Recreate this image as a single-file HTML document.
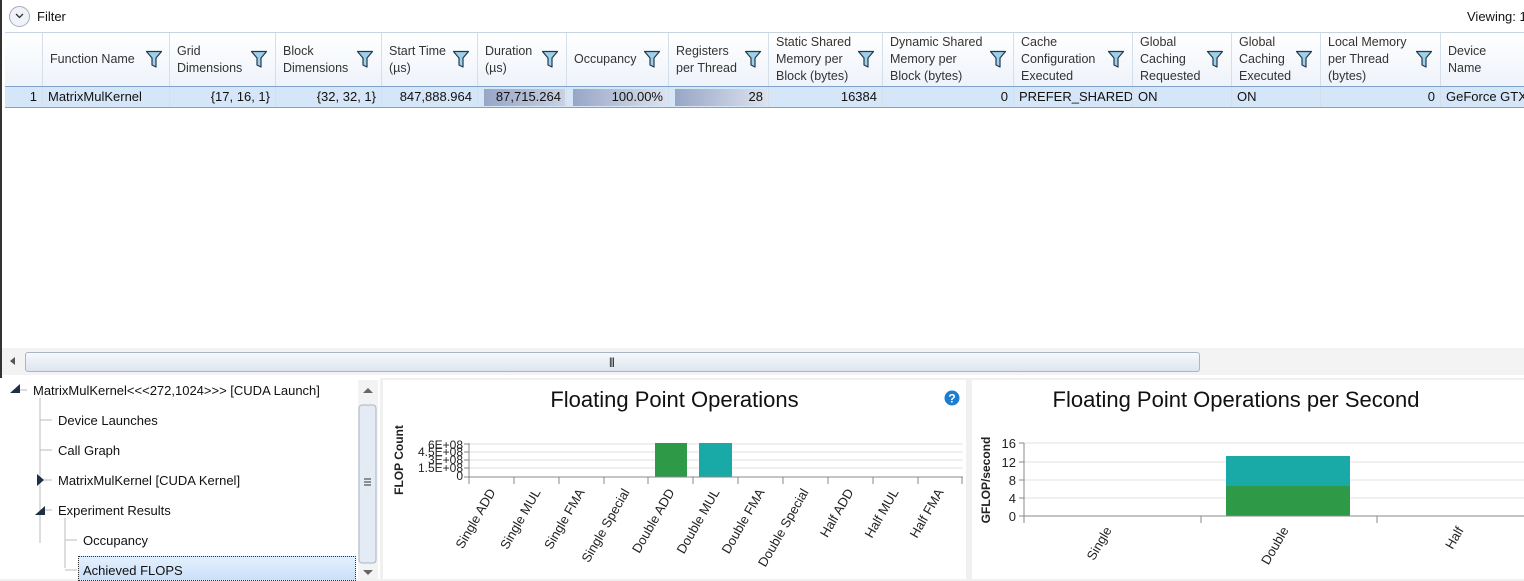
<!DOCTYPE html>
<html><head><meta charset="utf-8"><style>
*{margin:0;padding:0;box-sizing:border-box}
body{width:1524px;height:579px;overflow:hidden;background:#f0f0f0;font-family:"Liberation Sans",sans-serif;font-size:12.5px;color:#111;position:relative}
.a{position:absolute}
.top{left:0;top:0;width:1524px;height:378px;background:#fff}
.hd{top:33px;height:53px;background:linear-gradient(#fff,#eef3fa);border-right:1px solid #d5dfe9;display:flex;align-items:center;padding-left:7px;line-height:17px;color:#333}
.cell{top:87px;height:20px;line-height:20px;border-right:1px solid #d5dfe9;padding:0 5px;white-space:nowrap;overflow:hidden;font-size:13px}
.tl{position:absolute;font-size:13px;white-space:nowrap}
</style></head><body>
<div class="a top"></div>
<div class="a" style="left:0;top:0;width:5px;height:378px;background:#fff;border-left:2px solid #333"></div>
<div class="a" style="left:9px;top:6px;width:21px;height:21px;border:1px solid #aab;border-radius:50%;background:#eef3fa"></div>
<svg class="a" style="left:13px;top:12px" width="13" height="8"><path d="M3 2 L6.5 5.5 L10 2" stroke="#333" stroke-width="1.3" fill="none"/></svg>
<div class="a" style="left:37px;top:9px;font-size:13px">Filter</div>
<div class="a" style="left:1467px;top:9px;font-size:13px;white-space:nowrap">Viewing: 1</div>
<div class="a" style="left:5px;top:32px;width:1519px;height:1px;background:#c8d3df"></div>

<div class="a hd" style="left:5px;width:38px"></div>
<div class="a hd" style="left:43px;width:127px">Function Name</div>
<div class="a hd" style="left:170px;width:106px">Grid<br>Dimensions</div>
<div class="a hd" style="left:276px;width:106px">Block<br>Dimensions</div>
<div class="a hd" style="left:382px;width:96px">Start Time<br>(µs)</div>
<div class="a hd" style="left:478px;width:89px">Duration<br>(µs)</div>
<div class="a hd" style="left:567px;width:102px">Occupancy</div>
<div class="a hd" style="left:669px;width:100px">Registers<br>per Thread</div>
<div class="a hd" style="left:769px;width:114px">Static Shared<br>Memory per<br>Block (bytes)</div>
<div class="a hd" style="left:883px;width:131px">Dynamic Shared<br>Memory per<br>Block (bytes)</div>
<div class="a hd" style="left:1014px;width:119px">Cache<br>Configuration<br>Executed</div>
<div class="a hd" style="left:1133px;width:99px">Global<br>Caching<br>Requested</div>
<div class="a hd" style="left:1232px;width:89px">Global<br>Caching<br>Executed</div>
<div class="a hd" style="left:1321px;width:120px">Local Memory<br>per Thread<br>(bytes)</div>
<div class="a hd" style="left:1441px;width:90px">Device<br>Name</div>

<svg class="a" style="left:0;top:0" width="1524" height="90">
<defs><g id="fn"><path d="M0.5 0.5 H15.5 L10 7 V16 L6 14 V7 Z" fill="#9fd0ea" stroke="#24394e" stroke-width="1.2" stroke-linejoin="round"/></g></defs>
<use href="#fn" x="146" y="51"/><use href="#fn" x="251" y="51"/><use href="#fn" x="357" y="51"/>
<use href="#fn" x="453" y="51"/><use href="#fn" x="542" y="51"/><use href="#fn" x="644" y="51"/>
<use href="#fn" x="745" y="51"/><use href="#fn" x="858" y="51"/><use href="#fn" x="990" y="51"/>
<use href="#fn" x="1108" y="51"/><use href="#fn" x="1207" y="51"/><use href="#fn" x="1296" y="51"/>
<use href="#fn" x="1416" y="51"/>
</svg>

<div class="a" style="left:5px;top:86px;width:1519px;height:22px;background:#d5e6f8;border-top:1px solid #7fa3cf;border-bottom:1px solid #7fa3cf"></div>
<div class="a cell" style="left:5px;width:38px;text-align:right">1</div>
<div class="a cell" style="left:43px;width:127px">MatrixMulKernel</div>
<div class="a cell" style="left:170px;width:106px;text-align:right">{17, 16, 1}</div>
<div class="a cell" style="left:276px;width:106px;text-align:right">{32, 32, 1}</div>
<div class="a cell" style="left:382px;width:96px;text-align:right">847,888.964</div>
<div class="a" style="left:484px;top:89px;width:81px;height:17px;background:linear-gradient(90deg,#98a6c6,#c9d1e2)"></div>
<div class="a cell" style="left:478px;width:89px;text-align:right">87,715.264</div>
<div class="a" style="left:573px;top:89px;width:94px;height:17px;background:linear-gradient(90deg,#98a6c6,#dce3ee)"></div>
<div class="a cell" style="left:567px;width:102px;text-align:right">100.00%</div>
<div class="a" style="left:675px;top:89px;width:92px;height:17px;background:linear-gradient(90deg,#98a6c6,#dce3ee)"></div>
<div class="a cell" style="left:669px;width:100px;text-align:right">28</div>
<div class="a cell" style="left:769px;width:114px;text-align:right">16384</div>
<div class="a cell" style="left:883px;width:131px;text-align:right">0</div>
<div class="a cell" style="left:1014px;width:119px">PREFER_SHARED</div>
<div class="a cell" style="left:1133px;width:99px">ON</div>
<div class="a cell" style="left:1232px;width:89px">ON</div>
<div class="a cell" style="left:1321px;width:120px;text-align:right">0</div>
<div class="a cell" style="left:1441px;width:90px">GeForce GTX</div>

<div class="a" style="left:2px;top:348px;width:1522px;height:27px;background:#f3f3f3"></div>
<svg class="a" style="left:9px;top:356px" width="8" height="10"><path d="M6 1 L1 5 L6 9Z" fill="#555"/></svg>
<div class="a" style="left:25px;top:352px;width:1175px;height:20px;border:1px solid #a9b6c6;border-radius:3px;background:linear-gradient(#f6f8fb,#dde5ef)"></div>
<div class="a" style="left:609px;top:357px;font-size:10px;letter-spacing:-1px">|||</div>

<div class="a" style="left:0;top:378px;width:380px;height:201px;background:#fff"></div>
<div class="a" style="left:358px;top:380px;width:20px;height:199px;background:#f3f3f3"></div>
<svg class="a" style="left:358px;top:380px" width="20" height="199"><path d="M5 13 L10 8 L15 13Z" fill="#666"/><path d="M5 190 L10 195 L15 190Z" fill="#666"/>
<rect x="1" y="25" width="17" height="158" rx="3" fill="#e4ebf4" stroke="#a9b6c6"/><path d="M6 99H13M6 102H13M6 105H13" stroke="#333"/></svg>
<svg class="a" style="left:0;top:378px" width="360" height="201">
<path d="M10 15 L20 15 L20 6Z" fill="#1f2f45"/><path d="M20 12H27" stroke="#bbb"/>
<path d="M40 20V165M40 42H52M40 72H52M40 102H52M40 132H52" stroke="#bbb"/>
<path d="M37 96 L44 102 L37 108Z" fill="#1f2f45"/>
<path d="M35 137 L45 137 L45 128Z" fill="#1f2f45"/>
<path d="M65 140V190M65 162H77M65 192H77" stroke="#bbb"/>
</svg>
<div class="tl" style="left:33px;top:383px">MatrixMulKernel&lt;&lt;&lt;272,1024&gt;&gt;&gt; [CUDA Launch]</div>
<div class="tl" style="left:58px;top:413px">Device Launches</div>
<div class="tl" style="left:58px;top:443px">Call Graph</div>
<div class="tl" style="left:58px;top:473px">MatrixMulKernel [CUDA Kernel]</div>
<div class="tl" style="left:58px;top:503px">Experiment Results</div>
<div class="tl" style="left:83px;top:533px">Occupancy</div>
<div class="a" style="left:78px;top:556px;width:278px;height:25px;background:linear-gradient(#e4f0fd,#c9e0f9);border:1px dotted #333"></div>
<div class="tl" style="left:83px;top:563px">Achieved FLOPS</div>

<div class="a" style="left:383px;top:380px;width:583px;height:199px;background:#fff"></div>
<div class="a" style="left:383px;top:387px;width:583px;text-align:center;font-size:22px">Floating Point Operations</div>
<svg class="a" style="left:944px;top:390px" width="16" height="16"><circle cx="8" cy="8" r="7.5" fill="#1a7dd0"/><text x="8" y="12.5" font-size="12" font-weight="bold" fill="#fff" text-anchor="middle" font-family="Liberation Sans">?</text></svg>
<svg class="a" style="left:383px;top:380px" width="583" height="199">
<g stroke="#e2e2e2"><path d="M86 64H580M86 72H580M86 80H580M86 88H580"/></g>
<rect x="272" y="63" width="32" height="34" fill="#2e9a48"/>
<rect x="316" y="63" width="33" height="34" fill="#19aaa8"/>
<path d="M86 97H580" stroke="#888"/>
<path d="M86 63V104" stroke="#888"/>
<g stroke="#888"><path d="M81 64H86M81 72H86M81 80H86M81 88H86M81 97H86"/>
<path d="M131 97V104M176 97V104M221 97V104M265 97V104M310 97V104M355 97V104M400 97V104M445 97V104M490 97V104M535 97V104M579 97V104"/></g>
<g font-size="12" text-anchor="end" fill="#222" font-family="Liberation Sans">
<text x="80" y="69">6E+08</text><text x="80" y="76">4.5E+08</text><text x="80" y="84">3E+08</text><text x="80" y="92">1.5E+08</text><text x="80" y="100">0</text>
<text transform="translate(20,80) rotate(-90)" text-anchor="middle" font-weight="bold">FLOP Count</text>
</g>
<g font-size="13" text-anchor="end" fill="#222" font-family="Liberation Sans">
<text transform="translate(113,112) rotate(-60)">Single ADD</text>
<text transform="translate(158,112) rotate(-60)">Single MUL</text>
<text transform="translate(202,112) rotate(-60)">Single FMA</text>
<text transform="translate(247,112) rotate(-60)">Single Special</text>
<text transform="translate(292,112) rotate(-60)">Double ADD</text>
<text transform="translate(337,112) rotate(-60)">Double MUL</text>
<text transform="translate(382,112) rotate(-60)">Double FMA</text>
<text transform="translate(426,112) rotate(-60)">Double Special</text>
<text transform="translate(471,112) rotate(-60)">Half ADD</text>
<text transform="translate(516,112) rotate(-60)">Half MUL</text>
<text transform="translate(561,112) rotate(-60)">Half FMA</text>
</g>
</svg>

<div class="a" style="left:972px;top:380px;width:552px;height:199px;background:#fff"></div>
<div class="a" style="left:972px;top:387px;width:528px;text-align:center;font-size:22px">Floating Point Operations per Second</div>
<svg class="a" style="left:972px;top:380px" width="552" height="199">
<g stroke="#e2e2e2"><path d="M52 63H552M52 82H552M52 100H552M52 118H552"/></g>
<rect x="254" y="76" width="124" height="30" fill="#19aaa8"/>
<rect x="254" y="106" width="124" height="30" fill="#2e9a48"/>
<path d="M52 136H552" stroke="#888"/>
<path d="M52 63V143" stroke="#888"/>
<g stroke="#888"><path d="M47 63H52M47 82H52M47 100H52M47 118H52M47 136H52M229 136V143M405 136V143"/></g>
<g font-size="13" text-anchor="end" fill="#222" font-family="Liberation Sans">
<text x="44" y="68">16</text><text x="44" y="87">12</text><text x="44" y="105">8</text><text x="44" y="123">4</text><text x="44" y="141">0</text>
<text transform="translate(18,100) rotate(-90)" text-anchor="middle" font-weight="bold" font-size="12">GFLOP/second</text>
<text transform="translate(140,150) rotate(-60)">Single</text>
<text transform="translate(317,150) rotate(-60)">Double</text>
<text transform="translate(492,150) rotate(-60)">Half</text>
</g>
</svg>
</body></html>
